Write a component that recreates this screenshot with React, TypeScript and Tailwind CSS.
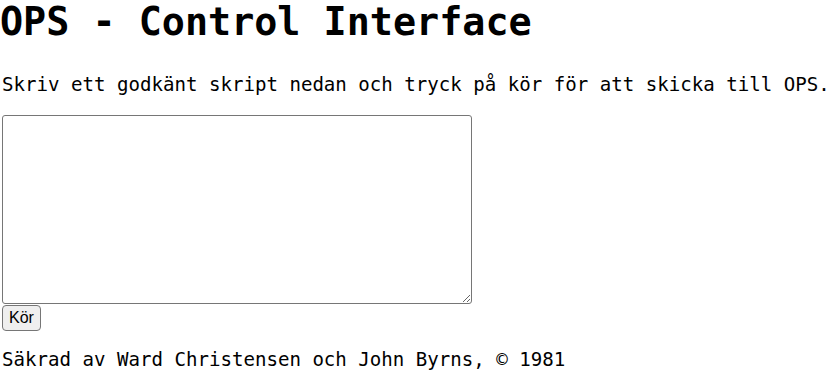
export default function App() {
  return (
    <div className="font-['DejaVu_Sans_Mono',monospace] text-[19.1px] text-black bg-white min-h-[375px]">
      <h1 className="text-[38.4px] font-bold leading-[44px] m-0 whitespace-nowrap">OPS - Control Interface</h1>
      <p className="mt-[29px] pl-[2px] leading-[23px] whitespace-nowrap">
        Skriv ett godkänt skript nedan och tryck på kör för att skicka till OPS.
      </p>
      <div className="mt-[19px] flex flex-col items-start pl-[2px]">
        <textarea className="block w-[470px] h-[189px] border border-[#767676] rounded-[3px] bg-white p-[2px] text-[13.33px] resize" />
        <button className="mt-[1px] px-[6px] py-[1px] bg-[#efefef] border border-[#767676] rounded-[4px] font-['Liberation_Sans',Arial,sans-serif] text-[16px] leading-[22px]">
          Kör
        </button>
      </div>
      <p className="mt-[17px] pl-[2px] leading-[23px] whitespace-nowrap">Säkrad av Ward Christensen och John Byrns, © 1981</p>
    </div>
  )
}
